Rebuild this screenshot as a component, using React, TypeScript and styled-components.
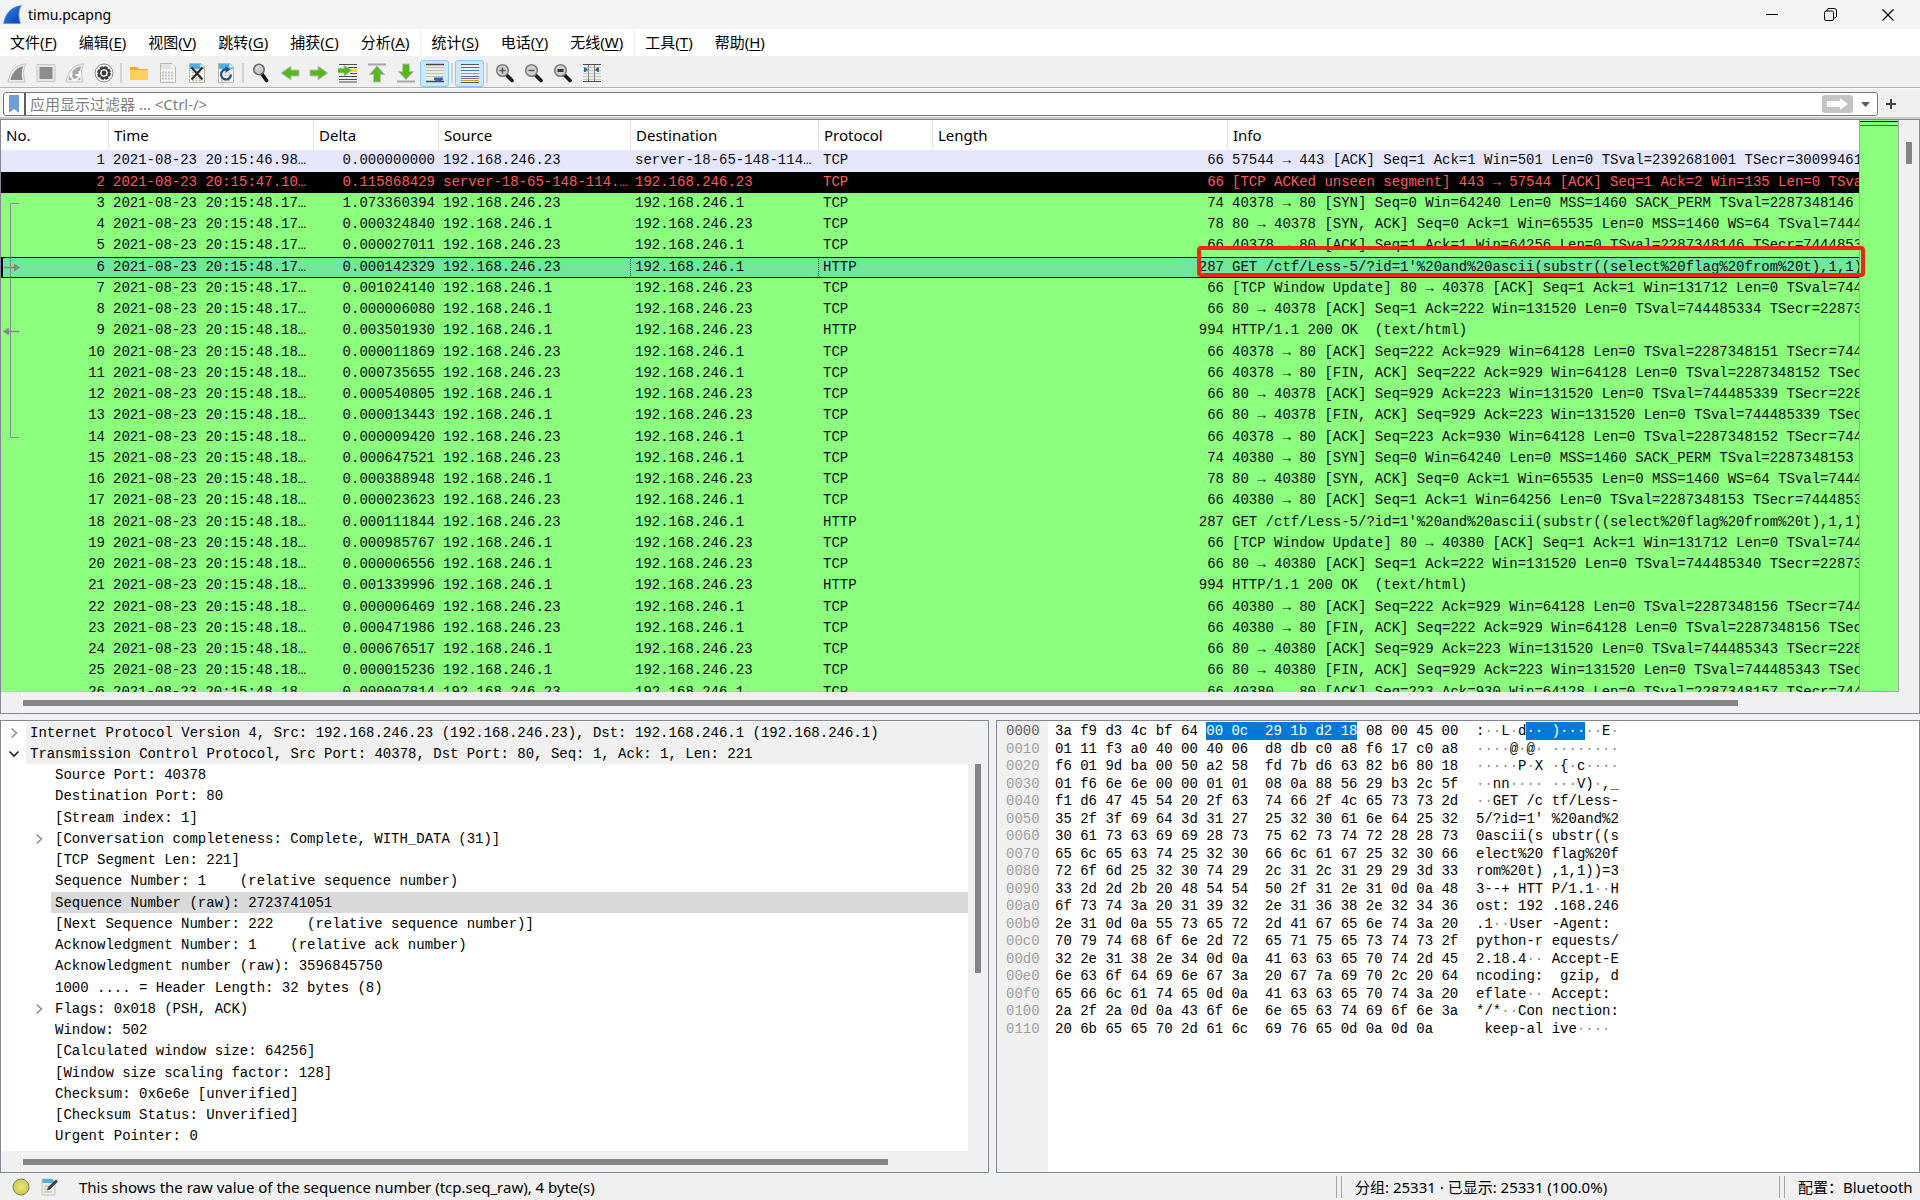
import React from 'react';
import styled, { createGlobalStyle, css } from 'styled-components';

const UI = '"Noto Sans", "Noto Sans CJK SC", sans-serif';
const MONO = '"Liberation Mono", "Noto Sans CJK SC", monospace';
const FRAME = '#828790';
const CHROME = '#f0f0f0';
const THUMB = '#858585';

const GlobalStyle = createGlobalStyle`
  *, *::before, *::after { box-sizing: border-box; }
  body { margin: 0; background: ${CHROME}; color: #000; font: 14px/20px ${UI}; }
  button, input { font: inherit; color: inherit; border: 0; padding: 0; margin: 0; background: none; }
`;

const Window = styled.div`
  display: flex;
  flex-direction: column;
  height: 100vh;
  min-height: 600px;
  overflow: hidden;
`;

/* ---------- title bar ---------- */

const TitleBar = styled.header`
  display: flex;
  align-items: center;
  height: 29px;
  flex: none;
  padding: 0 3px 0 2px;
  background: #f3f3f3;
`;
const Title = styled.h1`
  flex: 1;
  margin: 0 0 0 5px;
  font-size: 14px;
  font-weight: 400;
`;
const WindowButton = styled.button`
  display: flex;
  align-items: center;
  justify-content: center;
  width: 58px;
  height: 29px;
`;

/* ---------- menus ---------- */

const MenuBar = styled.nav`
  display: flex;
  flex: none;
  height: 27px;
  background: #fff;
`;
const MenuItem = styled.button<{ $edge?: boolean }>`
  padding: 0 11px 2px 10px;
  font-size: 15px;
  white-space: nowrap;
  border-right: 1px solid ${(p) => (p.$edge ? '#ececec' : 'transparent')};
  u { text-underline-offset: 2px; }
`;

/* ---------- tool bar ---------- */

const ToolBar = styled.div`
  display: flex;
  align-items: center;
  flex: none;
  height: 33px;
  padding: 2px 2px 0;
  border-bottom: 1px solid #fafafa;
  box-shadow: inset 0 -1px 0 #b4b4b4;
`;
const ToolButton = styled.button<{ $on?: boolean }>`
  display: flex;
  align-items: center;
  justify-content: center;
  width: 29px;
  height: 27px;
  border: 1px solid transparent;
  border-radius: 3px;
  ${(p) => p.$on && css`
    background: #cce8ff;
    border-color: #8ec9f5;
  `}
`;
const ToolGap = styled.span`
  width: 2px;
  height: 20px;
  margin: 0 2px;
  background: #d4d4d4;
`;

/* ---------- display filter ---------- */

const FilterBar = styled.form`
  display: flex;
  align-items: center;
  flex: none;
  height: 30px;
  padding: 3px 0 3px 3px;
  box-shadow: inset 0 -2px 0 #c8c8c8;
`;
const FilterBox = styled.div`
  display: flex;
  align-items: stretch;
  flex: 1;
  height: 24px;
  background: #fff;
  border: 1px solid #767676;
  border-radius: 3px;
`;
const Bookmark = styled.button`
  display: flex;
  align-items: center;
  justify-content: center;
  width: 22px;
  border-right: 2px solid #5e5e5e;
`;
const FilterInput = styled.input`
  flex: 1;
  min-width: 0;
  padding: 0 4px;
  font-size: 15px;
  outline: none;
  &::placeholder { color: #7d7d7d; opacity: 1; }
`;
const ApplyButton = styled.button`
  display: flex;
  align-items: center;
  justify-content: center;
  align-self: center;
  width: 31px;
  height: 18px;
  border-radius: 3px;
  background: #c4c4c4;
`;
const HistoryButton = styled.button`
  width: 24px;
  display: flex;
  align-items: center;
  justify-content: center;
`;
const AddButton = styled.button`
  width: 26px;
  margin-right: 16px;
  display: flex;
  align-items: center;
  justify-content: center;
`;

/* ---------- panes ---------- */

const Panes = styled.main`
  flex: 1;
  min-height: 0;
  display: grid;
  grid-template-rows: 595fr 453fr;
  gap: 6px;
`;
const LowerPanes = styled.div`
  min-height: 0;
  display: grid;
  grid-template-columns: 989fr 924fr;
  gap: 7px;
`;
const Pane = styled.section`
  display: flex;
  flex-direction: column;
  min-width: 0;
  min-height: 0;
  border: 1px solid ${FRAME};
  background: #fff;
`;
const PaneBody = styled.div`
  flex: 1;
  min-height: 0;
  display: flex;
`;
const Viewport = styled.div`
  position: relative;
  flex: 1;
  min-width: 0;
  overflow: hidden;
`;
const VScroll = styled.div<{ $before: number; $size: number }>`
  width: 20px;
  flex: none;
  background: ${CHROME};
  padding-top: ${(p) => p.$before}px;
  &::before {
    content: '';
    display: block;
    width: 6px;
    height: ${(p) => p.$size}px;
    margin: 0 auto;
    background: ${THUMB};
  }
`;
const HScroll = styled.div<{ $width: string }>`
  height: 21px;
  flex: none;
  display: flex;
  align-items: center;
  padding-left: 21px;
  background: ${CHROME};
  &::before {
    content: '';
    width: 1px;
    height: 20px;
    background: #fff;
  }
  &::after {
    content: '';
    width: ${(p) => p.$width};
    height: 6px;
    background: ${THUMB};
  }
`;
const Minimap = styled.div`
  width: 40px;
  flex: none;
  padding-top: 1px;
  background: #8dff7f;
  border: 1px solid #a8a8a8;
  border-top: 0;
  &::before {
    content: '';
    display: block;
    height: 5px;
    border-top: 1px solid #000;
    border-bottom: 1px solid #1f6f9c;
  }
`;

/* ---------- packet list ---------- */

const PacketTable = styled.table`
  width: 100%;
  table-layout: fixed;
  border-collapse: separate;
  border-spacing: 0;
  font: 14px/21px ${MONO};
`;
const HeadCell = styled.th`
  height: 30px;
  padding: 0 5px;
  border-right: 1px solid #e2e2e2;
  background: #fff;
  font: 400 15px/20px ${UI};
  text-align: left;
  &:last-child { border-right: 0; }
`;
type Tone = 'tcp' | 'bad' | 'udp';
const TONES: Record<Tone, [string, string]> = {
  udp: ['#e7e6ff', '#060e12'],
  bad: ['#000000', '#fc5c5c'],
  tcp: ['#8dff7f', '#060e12'],
};
const PacketRow = styled.tr<{ $tone: Tone; $current: boolean }>`
  height: 21px;
  background: ${(p) => (p.$current ? '#71e79a' : TONES[p.$tone][0])};
  color: ${(p) => TONES[p.$tone][1]};
  &:nth-child(4n + 1) { height: 22px; }
  ${(p) => p.$current && css`
    td { box-shadow: inset 0 1px 0 #000, inset 0 -1px 0 #000; }
    td:first-child { border-left: 2px solid #000; }
    td:nth-child(4), td:nth-child(5) { border-right: 1px dotted #1d3a2a; }
  `}
`;
const Cell = styled.td<{ $right?: boolean }>`
  padding: 0 0 0 4px;
  vertical-align: top;
  overflow: hidden;
  white-space: pre;
  text-align: left;
  ${(p) => p.$right && css`
    padding: 0 4px;
    text-align: right;
  `}
`;
const Relations = styled.svg`
  position: absolute;
  left: 0;
  top: 83px;
`;
const Callout = styled.div`
  position: absolute;
  top: 126px;
  left: 1196px;
  right: 54px;
  height: 31px;
  border: 4px solid #fb2312;
  border-radius: 4px;
  pointer-events: none;
`;
const ListPane = styled(Pane)`
  position: relative;
`;

/* ---------- packet details ---------- */

const Tree = styled.ul`
  margin: 0;
  padding: 1px 0 0;
  list-style: none;
  font: 14px/21px ${MONO};
`;
const TreeRow = styled.li<{ $depth: number }>`
  display: flex;
  height: 21px;
  padding-left: ${(p) => p.$depth * 25}px;
  &:nth-child(4n) { height: 22px; }
`;
const Toggle = styled.button`
  width: 25px;
  flex: none;
  display: flex;
  align-items: center;
  justify-content: center;
`;
const TreeText = styled.span<{ $fill?: string }>`
  flex: 1;
  padding: 1px 0 0 4px;
  white-space: pre;
  overflow: hidden;
  background: ${(p) => p.$fill ?? 'transparent'};
`;

/* ---------- packet bytes ---------- */

const HexView = styled.div`
  flex: 1;
  padding-top: 1px;
  background: linear-gradient(to right, ${CHROME} 51px, #fff 51px);
  font: 14px/18px ${MONO};
`;
const HexRow = styled.div`
  display: grid;
  grid-template-columns: 51px 428px 1fr;
  height: 17px;
  white-space: pre;
  &:nth-child(odd) { height: 18px; }
`;
const Offset = styled.span<{ $active: boolean }>`
  padding-left: 9px;
  color: ${(p) => (p.$active ? '#606060' : '#a0a0a0')};
`;
const HexBytes = styled.span`
  padding-left: 7px;
`;
const Mark = styled.mark`
  display: inline-block;
  background: #0078d7;
  color: #fff;
`;
const Dot = styled.span`
  color: #8c8c8c;
`;

/* ---------- status bar ---------- */

const StatusBar = styled.footer`
  display: grid;
  grid-template-columns: 1336fr 443fr 141fr;
  align-items: center;
  flex: none;
  height: 27px;
  font-size: 15px;
  white-space: nowrap;
`;
const StatusPart = styled.div<{ $split?: boolean }>`
  display: flex;
  align-items: center;
  min-width: 0;
  height: 25px;
  padding-left: 12px;
  ${(p) => p.$split && css`
    padding-left: 0;
    &::before {
      content: '';
      width: 6px;
      height: 22px;
      margin-right: 13px;
      border: 1px solid #a6a6a6;
      border-width: 0 1px;
    }
  `}
`;
const StatusButton = styled.button`
  display: flex;
  margin-right: 11px;
`;
const StatusText = styled.span`
  margin-left: 9px;
`;

/* ---------- icons ---------- */

type IconProps = { children: React.ReactNode; size?: number };
const Icon = ({ children, size = 20 }: IconProps) => (
  <svg width={size} height={size} viewBox="0 0 20 20" fill="none" aria-hidden="true">{children}</svg>
);

const FIN = 'M1.5 18.5C3 10 8 2.500 18.500 1.500C15.500 6 15.500 12 17.500 18.500Z';

const Logo = () => (
  <Icon size={21}>
    <defs>
      <linearGradient id="fin" x1="0" y1="0" x2="1" y2="1">
        <stop offset="0" stopColor="#2f86ee" /><stop offset="1" stopColor="#0a3fb0" />
      </linearGradient>
    </defs>
    <path d={FIN} fill="url(#fin)" stroke="#4b8fe0" strokeWidth=".6" />
  </Icon>
);
const Page = ({ tint }: { tint: string }) => (
  <>
    <path d="M2.500 .500H14L17.500 4V19.500H2.500Z" fill="#f6f6ee" stroke="#b9b9b0" />
    <path d="M3 1H13.800L17 4.200V6H3Z" fill={tint} />
    <path d="M13.500 1V4.500H17Z" fill="#fff" />
    <path d="M5 9.500H15M5 12.500H15M5 15.500H15M5 17.500H15" stroke="#bdbdb2" strokeWidth="1.300" strokeDasharray="2 1.300" />
  </>
);
const GreenRight = ({ y = 0, x = 0 }) => (
  <path transform={`translate(${x} ${y})`} d="M1.500 7.500H9.500V4L18 10L9.500 16V12.500H1.500Z" fill="#55b71c" stroke="#b9bdb6" strokeWidth="2" strokeLinejoin="round" paintOrder="stroke" />
);
const Lens = ({ children }: { children?: React.ReactNode }) => (
  <Icon>
    <path d="M12 12.500L17 17.500" stroke="#161616" strokeWidth="3.600" strokeLinecap="round" />
    <circle cx="7.500" cy="7.500" r="5.800" fill="#cfcfcf" stroke="#7c7c7c" strokeWidth="1.500" />
    {children}
  </Icon>
);

const toolIcons: Record<string, React.ReactNode> = {
  start: <Icon><path d="M1 19C2.500 9.500 7.500 1.500 19 .800C16 6 16 12 18.200 19Z" fill="#ececec" stroke="#c3c3c3" /><path d="M3.500 17C5 10.500 9 5 16 3C14.500 8 14.500 13 15.500 17Z" fill="#888" /></Icon>,
  stop: <Icon><path d="M1 1.500H19V18.500H1Z" fill="#e6e6e6" stroke="#c6c6c6" /><path d="M3.500 4H16.500V16H3.500Z" fill="#8c8c8c" /></Icon>,
  restart: <Icon><path d="M1 19C2.500 9.500 7.500 1.500 19 .800C16 6 16 12 18.200 19Z" fill="#ececec" stroke="#c3c3c3" /><path d="M3.500 17C5 10.500 9 5 16 3C14.500 8 14.500 13 15.500 17Z" fill="#a6a6a6" /><path d="M7.500 10A3.800 3.800 0 1 0 13.500 11.500M14.500 8V12H10.500" stroke="#fff" strokeWidth="1.800" /></Icon>,
  options: <Icon><circle cx="10" cy="10" r="9" fill="#f4f4f4" stroke="#8b8b8b" /><circle cx="10" cy="10" r="5.400" stroke="#3b3b3b" strokeWidth="3" strokeDasharray="2.900 1.300" /><circle cx="10" cy="10" r="5" stroke="#3b3b3b" strokeWidth="1.800" /><circle cx="10" cy="10" r="2.400" fill="#3b3b3b" /></Icon>,
  open: <Icon><path d="M1 4H8L10 6H19V17H1Z" fill="#f0ae1f" /><path d="M1 7H19V17H1Z" fill="#ffd15c" /></Icon>,
  save: <Icon><Page tint="#e3e3e3" /><path d="M4 8H16V18H4Z" fill="#f3f3f3" /><path d="M5 8.500V17M8 8.500V17M11 8.500V17M14 8.500V17" stroke="#c2c2c2" strokeWidth="1.800" strokeDasharray="2 1" /></Icon>,
  close: <Icon><Page tint="#4cb0e4" /><path d="M4.500 4.500L15.500 16.500M15.500 4.500L4.500 16.500" stroke="#272b2e" strokeWidth="2" /></Icon>,
  reload: <Icon><Page tint="#4cb0e4" /><path d="M15 11.500A5 5 0 1 1 10.500 6.500" stroke="#22508e" strokeWidth="2.200" /><path d="M9.500 3L14.500 6.500L9.500 9.800Z" fill="#22508e" /></Icon>,
  find: <Icon><path d="M11 11L15.500 17.500" stroke="#161616" strokeWidth="3.600" strokeLinecap="round" /><circle cx="8" cy="6.500" r="5.200" fill="#cbcbcb" stroke="#6a6a6a" strokeWidth="1.600" /><path d="M5.500 6A2.600 2.600 0 0 1 8 3.800" stroke="#fff" /></Icon>,
  back: <Icon><g transform="matrix(-1 0 0 1 20 0)"><GreenRight /></g></Icon>,
  forward: <Icon><GreenRight /></Icon>,
  goto: <Icon><path d="M1 1.500H19M10 4.500H19M12 10.500H19M1 13.500H19M1 16.500H19M1 19H19" stroke="#4d4d4d" strokeWidth="1.200" /><path d="M12 7.500H19" stroke="#f9dc38" strokeWidth="3" /><g transform="translate(-1 -1) scale(.78)"><GreenRight y={1} /></g></Icon>,
  top: <Icon><path d="M1 1.500H19" stroke="#a9a9a9" strokeWidth="2" /><path d="M10 3.500L16.500 11H13V18.500H7V11H3.500Z" fill="#55b71c" stroke="#b9bdb6" strokeWidth="1.800" paintOrder="stroke" /></Icon>,
  bottom: <Icon><path d="M1 18.500H19" stroke="#a9a9a9" strokeWidth="2" /><path d="M10 16L16.500 9H13V1.500H7V9H3.500Z" fill="#55b71c" stroke="#b9bdb6" strokeWidth="1.800" paintOrder="stroke" /></Icon>,
  follow: <Icon><path d="M1 1H19V19H1Z" fill="#e9ece4" /><path d="M1 1.500H19M1 18.500H19" stroke="#474747" strokeWidth="1.500" /><path d="M1 4.500H19M1 7.500H19M1 10.500H19M1 13.500H19" stroke="#bcc0b6" /><path d="M9 14.500H18V16.500L14.500 19H12.500L9 16.500Z" fill="#2f62a8" /></Icon>,
  colorize: <Icon><path d="M1 1H19V19H1Z" fill="#eef0ea" /><path d="M1 1.500H19" stroke="#555" /><path d="M1 4.500H19" stroke="#f0352c" /><path d="M1 7.500H19" stroke="#3f6fc0" /><path d="M1 10.500H19" stroke="#6fc81e" /><path d="M1 13.500H19" stroke="#5868b4" /><path d="M1 15.500H19" stroke="#94629f" /><path d="M1 17.500H19" stroke="#c9a126" /><path d="M1 19.500H19" stroke="#555" /></Icon>,
  zoomIn: <Lens><path d="M4.500 7.500H10.500M7.500 4.500V10.500" stroke="#555" strokeWidth="1.500" /></Lens>,
  zoomOut: <Lens><path d="M4.500 7.500H10.500" stroke="#555" strokeWidth="1.500" /></Lens>,
  zoomReset: <Lens><path d="M4.500 7.500H10.500" stroke="#333" strokeWidth="3" /></Lens>,
  resize: <Icon><path d="M1 1H19V19H1Z" fill="#eceee8" /><path d="M1 1.500H19M1 18.500H19" stroke="#4d4d4d" /><path d="M1 4.500H19M1 7.500H19M1 10.500H19M1 13.500H19M1 16.500H19" stroke="#c6cabf" /><path d="M6.500 2V18M12.500 2V18" stroke="#858585" /><path d="M2 4.500H3.500L6 6.500L3.500 9H2ZM17 4.500H15.500L13 6.500L15.500 9H17Z" fill="#2f62a8" /></Icon>,
};

/* ---------- data ---------- */

const MENUS: [string, string, boolean?][] = [
  ['文件', 'F'], ['编辑', 'E'], ['视图', 'V'], ['跳转', 'G'], ['捕获', 'C'], ['分析', 'A', true],
  ['统计', 'S'], ['电话', 'Y'], ['无线', 'W', true], ['工具', 'T'], ['帮助', 'H'],
];

const TOOLS: { id: string; label: string; on?: boolean }[][] = [
  [{ id: 'start', label: '开始捕获' }, { id: 'stop', label: '停止捕获' }, { id: 'restart', label: '重新开始捕获' }, { id: 'options', label: '捕获选项' }],
  [{ id: 'open', label: '打开' }, { id: 'save', label: '保存' }, { id: 'close', label: '关闭' }, { id: 'reload', label: '重新加载' }],
  [{ id: 'find', label: '查找分组' }, { id: 'back', label: '后退' }, { id: 'forward', label: '前进' }, { id: 'goto', label: '转到分组' },
    { id: 'top', label: '首个分组' }, { id: 'bottom', label: '最后分组' }, { id: 'follow', label: '自动滚动', on: true }],
  [{ id: 'colorize', label: '着色', on: true }],
  [{ id: 'zoomIn', label: '放大' }, { id: 'zoomOut', label: '缩小' }, { id: 'zoomReset', label: '普通大小' }, { id: 'resize', label: '调整列宽' }],
];

const COLUMNS: [string, number | undefined][] = [
  ['No.', 108], ['Time', 205], ['Delta', 125], ['Source', 192], ['Destination', 188],
  ['Protocol', 114], ['Length', 295], ['Info', undefined],
];

const A = '192.168.246.23';
const B = '192.168.246.1';
type Packet = [sec: string, delta: string, src: string, dst: string, proto: string, len: number, info: string, tone?: Tone];
const PACKETS: Packet[] = [
  ['46.98', '0.000000000', A, 'server-18-65-148-114…', 'TCP', 66, '57544 → 443 [ACK] Seq=1 Ack=1 Win=501 Len=0 TSval=2392681001 TSecr=300994611', 'udp'],
  ['47.10', '0.115868429', 'server-18-65-148-114.…', A, 'TCP', 66, '[TCP ACKed unseen segment] 443 → 57544 [ACK] Seq=1 Ack=2 Win=135 Len=0 TSval=', 'bad'],
  ['48.17', '1.073360394', A, B, 'TCP', 74, '40378 → 80 [SYN] Seq=0 Win=64240 Len=0 MSS=1460 SACK_PERM TSval=2287348146 TS'],
  ['48.17', '0.000324840', B, A, 'TCP', 78, '80 → 40378 [SYN, ACK] Seq=0 Ack=1 Win=65535 Len=0 MSS=1460 WS=64 TSval=744485'],
  ['48.17', '0.000027011', A, B, 'TCP', 66, '40378 → 80 [ACK] Seq=1 Ack=1 Win=64256 Len=0 TSval=2287348146 TSecr=744485334'],
  ['48.17', '0.000142329', A, B, 'HTTP', 287, "GET /ctf/Less-5/?id=1'%20and%20ascii(substr((select%20flag%20from%20t),1,1))="],
  ['48.17', '0.001024140', B, A, 'TCP', 66, '[TCP Window Update] 80 → 40378 [ACK] Seq=1 Ack=1 Win=131712 Len=0 TSval=74448'],
  ['48.17', '0.000006080', B, A, 'TCP', 66, '80 → 40378 [ACK] Seq=1 Ack=222 Win=131520 Len=0 TSval=744485334 TSecr=2287348'],
  ['48.18', '0.003501930', B, A, 'HTTP', 994, 'HTTP/1.1 200 OK  (text/html)'],
  ['48.18', '0.000011869', A, B, 'TCP', 66, '40378 → 80 [ACK] Seq=222 Ack=929 Win=64128 Len=0 TSval=2287348151 TSecr=74448'],
  ['48.18', '0.000735655', A, B, 'TCP', 66, '40378 → 80 [FIN, ACK] Seq=222 Ack=929 Win=64128 Len=0 TSval=2287348152 TSecr='],
  ['48.18', '0.000540805', B, A, 'TCP', 66, '80 → 40378 [ACK] Seq=929 Ack=223 Win=131520 Len=0 TSval=744485339 TSecr=22873'],
  ['48.18', '0.000013443', B, A, 'TCP', 66, '80 → 40378 [FIN, ACK] Seq=929 Ack=223 Win=131520 Len=0 TSval=744485339 TSecr='],
  ['48.18', '0.000009420', A, B, 'TCP', 66, '40378 → 80 [ACK] Seq=223 Ack=930 Win=64128 Len=0 TSval=2287348152 TSecr=74448'],
  ['48.18', '0.000647521', A, B, 'TCP', 74, '40380 → 80 [SYN] Seq=0 Win=64240 Len=0 MSS=1460 SACK_PERM TSval=2287348153 TS'],
  ['48.18', '0.000388948', B, A, 'TCP', 78, '80 → 40380 [SYN, ACK] Seq=0 Ack=1 Win=65535 Len=0 MSS=1460 WS=64 TSval=744485'],
  ['48.18', '0.000023623', A, B, 'TCP', 66, '40380 → 80 [ACK] Seq=1 Ack=1 Win=64256 Len=0 TSval=2287348153 TSecr=744485340'],
  ['48.18', '0.000111844', A, B, 'HTTP', 287, "GET /ctf/Less-5/?id=1'%20and%20ascii(substr((select%20flag%20from%20t),1,1))="],
  ['48.18', '0.000985767', B, A, 'TCP', 66, '[TCP Window Update] 80 → 40380 [ACK] Seq=1 Ack=1 Win=131712 Len=0 TSval=74448'],
  ['48.18', '0.000006556', B, A, 'TCP', 66, '80 → 40380 [ACK] Seq=1 Ack=222 Win=131520 Len=0 TSval=744485340 TSecr=2287348'],
  ['48.18', '0.001339996', B, A, 'HTTP', 994, 'HTTP/1.1 200 OK  (text/html)'],
  ['48.18', '0.000006469', A, B, 'TCP', 66, '40380 → 80 [ACK] Seq=222 Ack=929 Win=64128 Len=0 TSval=2287348156 TSecr=74448'],
  ['48.18', '0.000471986', A, B, 'TCP', 66, '40380 → 80 [FIN, ACK] Seq=222 Ack=929 Win=64128 Len=0 TSval=2287348156 TSecr='],
  ['48.18', '0.000676517', B, A, 'TCP', 66, '80 → 40380 [ACK] Seq=929 Ack=223 Win=131520 Len=0 TSval=744485343 TSecr=22873'],
  ['48.18', '0.000015236', B, A, 'TCP', 66, '80 → 40380 [FIN, ACK] Seq=929 Ack=223 Win=131520 Len=0 TSval=744485343 TSecr='],
  ['48.18', '0.000007814', A, B, 'TCP', 66, '40380 → 80 [ACK] Seq=223 Ack=930 Win=64128 Len=0 TSval=2287348157 TSecr=74448'],
];
const CURRENT_PACKET = 5;

type Node = { text: string; depth: number; arrow?: 'open' | 'shut'; fill?: string };
const DETAILS: Node[] = [
  { text: 'Internet Protocol Version 4, Src: 192.168.246.23 (192.168.246.23), Dst: 192.168.246.1 (192.168.246.1)', depth: 0, arrow: 'shut', fill: CHROME },
  { text: 'Transmission Control Protocol, Src Port: 40378, Dst Port: 80, Seq: 1, Ack: 1, Len: 221', depth: 0, arrow: 'open', fill: CHROME },
  { text: 'Source Port: 40378', depth: 1 },
  { text: 'Destination Port: 80', depth: 1 },
  { text: '[Stream index: 1]', depth: 1 },
  { text: '[Conversation completeness: Complete, WITH_DATA (31)]', depth: 1, arrow: 'shut' },
  { text: '[TCP Segment Len: 221]', depth: 1 },
  { text: 'Sequence Number: 1    (relative sequence number)', depth: 1 },
  { text: 'Sequence Number (raw): 2723741051', depth: 1, fill: '#d9d9d9' },
  { text: '[Next Sequence Number: 222    (relative sequence number)]', depth: 1 },
  { text: 'Acknowledgment Number: 1    (relative ack number)', depth: 1 },
  { text: 'Acknowledgment number (raw): 3596845750', depth: 1 },
  { text: '1000 .... = Header Length: 32 bytes (8)', depth: 1 },
  { text: 'Flags: 0x018 (PSH, ACK)', depth: 1, arrow: 'shut' },
  { text: 'Window: 502', depth: 1 },
  { text: '[Calculated window size: 64256]', depth: 1 },
  { text: '[Window size scaling factor: 128]', depth: 1 },
  { text: 'Checksum: 0x6e6e [unverified]', depth: 1 },
  { text: '[Checksum Status: Unverified]', depth: 1 },
  { text: 'Urgent Pointer: 0', depth: 1 },
];

const BYTES = `
3a f9 d3 4c bf 64 00 0c 29 1b d2 18 08 00 45 00
01 11 f3 a0 40 00 40 06 d8 db c0 a8 f6 17 c0 a8
f6 01 9d ba 00 50 a2 58 fd 7b d6 63 82 b6 80 18
01 f6 6e 6e 00 00 01 01 08 0a 88 56 29 b3 2c 5f
f1 d6 47 45 54 20 2f 63 74 66 2f 4c 65 73 73 2d
35 2f 3f 69 64 3d 31 27 25 32 30 61 6e 64 25 32
30 61 73 63 69 69 28 73 75 62 73 74 72 28 28 73
65 6c 65 63 74 25 32 30 66 6c 61 67 25 32 30 66
72 6f 6d 25 32 30 74 29 2c 31 2c 31 29 29 3d 33
33 2d 2d 2b 20 48 54 54 50 2f 31 2e 31 0d 0a 48
6f 73 74 3a 20 31 39 32 2e 31 36 38 2e 32 34 36
2e 31 0d 0a 55 73 65 72 2d 41 67 65 6e 74 3a 20
70 79 74 68 6f 6e 2d 72 65 71 75 65 73 74 73 2f
32 2e 31 38 2e 34 0d 0a 41 63 63 65 70 74 2d 45
6e 63 6f 64 69 6e 67 3a 20 67 7a 69 70 2c 20 64
65 66 6c 61 74 65 0d 0a 41 63 63 65 70 74 3a 20
2a 2f 2a 0d 0a 43 6f 6e 6e 65 63 74 69 6f 6e 3a
20 6b 65 65 70 2d 61 6c 69 76 65 0d 0a 0d 0a`.trim().split('\n').map((line) => line.split(' '));

const SELECTED = [6, 12];

const hexText = (row: string[], from: number, to: number) =>
  row.slice(from, to).map((byte, i) => (from + i === 8 && i > 0 ? ' ' : '') + byte).join(' ');

const asciiText = (row: string[], from: number, to: number) => {
  const chars = row.slice(from, to).map((byte, i) => {
    const code = parseInt(byte, 16);
    const printable = code >= 32 && code < 127;
    return { gap: from + i === 8, char: printable ? String.fromCharCode(code) : '·', printable };
  });
  return chars.map((c, i) => (
    <React.Fragment key={i}>
      {c.gap && ' '}
      {c.printable ? c.char : <Dot>{c.char}</Dot>}
    </React.Fragment>
  ));
};

const SelectedAscii = styled(Mark)`
  ${Dot} { color: #fff; }
`;

const Chevron = ({ open }: { open: boolean }) => (
  <svg width="12" height="12" viewBox="0 0 12 12" fill="none" aria-hidden="true">
    {open
      ? <path d="M1.500 3.500L6 8L10.500 3.500" stroke="#1f1f1f" strokeWidth="1.600" />
      : <path d="M3.500 1.500L8.500 6L3.500 10.500" stroke="#8f8f8f" strokeWidth="1.600" />}
  </svg>
);

/* ---------- sections ---------- */

const PacketList = () => (
  <ListPane aria-label="Packet list">
    <PaneBody>
      <Viewport>
        <PacketTable>
          <colgroup>
            {COLUMNS.map(([name, width]) => <col key={name} width={width} />)}
          </colgroup>
          <thead>
            <tr>{COLUMNS.map(([name]) => <HeadCell key={name} scope="col">{name}</HeadCell>)}</tr>
          </thead>
          <tbody>
            {PACKETS.map(([sec, delta, src, dst, proto, len, info, tone = 'tcp'], i) => (
              <PacketRow key={i} $tone={tone} $current={i === CURRENT_PACKET}>
                <Cell $right>{i + 1}</Cell>
                <Cell>2021-08-23 20:15:{sec}…</Cell>
                <Cell $right>{delta}</Cell>
                <Cell>{src}</Cell>
                <Cell>{dst}</Cell>
                <Cell>{proto}</Cell>
                <Cell $right>{len}</Cell>
                <Cell>{info}</Cell>
              </PacketRow>
            ))}
          </tbody>
        </PacketTable>
        <Relations width="22" height="238" viewBox="0 0 22 238" fill="none" stroke="#7f8a80" aria-hidden="true">
          <path d="M18 .500H9.500V234.500H18" />
          <path d="M3 64.500H13M7 128.500H18" strokeWidth="1.500" />
          <path d="M13 60.500L19 64.500L13 68.500ZM8 124.500L2 128.500L8 132.500Z" fill="#7f8a80" stroke="none" />
        </Relations>
      </Viewport>
      <Minimap />
      <VScroll $before={22} $size={22} />
    </PaneBody>
    <HScroll $width="90.400%" />
    <Callout />
  </ListPane>
);

const PacketDetails = () => (
  <Pane aria-label="Packet details">
    <PaneBody>
      <Viewport>
        <Tree>
          {DETAILS.map((node) => (
            <TreeRow key={node.text} $depth={node.depth}>
              <Toggle as={node.arrow ? 'button' : 'span'} aria-label={node.arrow ? node.text : undefined}>
                {node.arrow && <Chevron open={node.arrow === 'open'} />}
              </Toggle>
              <TreeText $fill={node.fill}>{node.text}</TreeText>
            </TreeRow>
          ))}
        </Tree>
      </Viewport>
      <VScroll $before={43} $size={209} />
    </PaneBody>
    <HScroll $width="89.500%" />
  </Pane>
);

const PacketBytes = () => (
  <Pane aria-label="Packet bytes">
    <HexView>
      {BYTES.map((row, i) => {
        const [from, to] = i === 0 ? SELECTED : [16, 16];
        return (
          <HexRow key={i}>
            <Offset $active={i === 0}>{(i * 16).toString(16).padStart(4, '0')}</Offset>
            <HexBytes>
              {hexText(row, 0, from)}
              {i === 0 && <> <Mark>{hexText(row, from, to)}</Mark> {hexText(row, to, 16)}</>}
            </HexBytes>
            <span>
              {asciiText(row, 0, from)}
              {i === 0 && <><SelectedAscii>{asciiText(row, from, to)}</SelectedAscii>{asciiText(row, to, 16)}</>}
            </span>
          </HexRow>
        );
      })}
    </HexView>
  </Pane>
);

export default function App() {
  return (
    <Window>
      <GlobalStyle />
      <TitleBar>
        <Logo />
        <Title>timu.pcapng</Title>
        <WindowButton aria-label="最小化">
          <svg width="12" height="12" viewBox="0 0 12 12"><path d="M0 5.500H12" stroke="#000" /></svg>
        </WindowButton>
        <WindowButton aria-label="还原">
          <svg width="13" height="13" viewBox="0 0 13 13" fill="none" stroke="#000">
            <rect x=".5" y="3" width="9" height="9.500" rx="1.500" />
            <path d="M3 3V2.200Q3 .500 5 .500H10Q12.500 .500 12.500 3V8Q12.500 9.800 10.800 10H9.500" />
          </svg>
        </WindowButton>
        <WindowButton aria-label="关闭">
          <svg width="12" height="12" viewBox="0 0 12 12"><path d="M.500 .500L11.500 11.500M11.500 .500L.500 11.500" stroke="#000" strokeWidth="1.100" /></svg>
        </WindowButton>
      </TitleBar>
      <MenuBar>
        {MENUS.map(([name, key, edge]) => (
          <MenuItem key={key} $edge={edge}>{name}(<u>{key}</u>)</MenuItem>
        ))}
      </MenuBar>
      <ToolBar role="toolbar">
        {TOOLS.map((group, i) => (
          <React.Fragment key={i}>
            {i > 0 && <ToolGap />}
            {group.map((tool) => (
              <ToolButton key={tool.id} aria-label={tool.label} $on={tool.on}>{toolIcons[tool.id]}</ToolButton>
            ))}
          </React.Fragment>
        ))}
      </ToolBar>
      <FilterBar onSubmit={(e) => e.preventDefault()}>
        <FilterBox>
          <Bookmark type="button" aria-label="书签">
            <svg width="10" height="18" viewBox="0 0 10 18"><path d="M0 0H10V18L5 14L0 18Z" fill="#6f9fd4" /></svg>
          </Bookmark>
          <FilterInput aria-label="应用显示过滤器" placeholder="应用显示过滤器 … <Ctrl-/>" />
          <ApplyButton aria-label="应用">
            <svg width="21" height="12" viewBox="0 0 21 12"><path d="M0 3H13V0L21 6L13 12V9H0Z" fill="#fff" /></svg>
          </ApplyButton>
          <HistoryButton type="button" aria-label="历史">
            <svg width="9" height="5" viewBox="0 0 9 5"><path d="M0 0H9L4.500 5Z" fill="#5a5a5a" /></svg>
          </HistoryButton>
        </FilterBox>
        <AddButton type="button" aria-label="添加">
          <svg width="10" height="10" viewBox="0 0 10 10"><path d="M5 0V10M0 5H10" stroke="#444" strokeWidth="2" /></svg>
        </AddButton>
      </FilterBar>
      <Panes>
        <PacketList />
        <LowerPanes>
          <PacketDetails />
          <PacketBytes />
        </LowerPanes>
      </Panes>
      <StatusBar>
        <StatusPart>
          <StatusButton aria-label="专家信息">
            <svg width="18" height="18" viewBox="0 0 18 18">
              <defs><radialGradient id="led"><stop offset="0" stopColor="#e9e477" /><stop offset="1" stopColor="#cfca4c" /></radialGradient></defs>
              <circle cx="9" cy="9" r="8" fill="url(#led)" stroke="#7d7d62" />
            </svg>
          </StatusButton>
          <StatusButton aria-label="捕获注释">
            <svg width="18" height="18" viewBox="0 0 18 18" fill="none">
              <path d="M1 1H11L14 4V17H1Z" fill="#eceee6" stroke="#bfc2b8" />
              <path d="M1.500 1H11L13.500 3.500V5H1.500Z" fill="#4cb0e4" />
              <path d="M3 8H8M3 11H7M3 14H11" stroke="#b5b8ac" />
              <path d="M6 12.500L7 9L15 1.500L17 3.500L9 11.500Z" fill="#3d4347" />
            </svg>
          </StatusButton>
          <StatusText>This shows the raw value of the sequence number (tcp.seq_raw), 4 byte(s)</StatusText>
        </StatusPart>
        <StatusPart $split>分组: 25331 · 已显示: 25331 (100.0%)</StatusPart>
        <StatusPart $split>配置：Bluetooth</StatusPart>
      </StatusBar>
    </Window>
  );
}
